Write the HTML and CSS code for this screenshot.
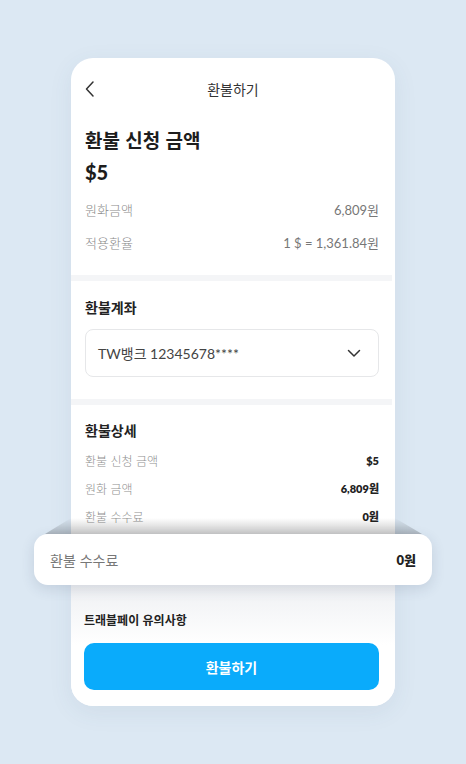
FILE: index.html
```html
<!DOCTYPE html>
<html lang="ko">
<head>
<meta charset="utf-8">
<link rel="stylesheet" href="styles.css">
</head>
<body>
<div class="card">
  <header class="top-bar">
    <svg class="back" width="12" height="18" viewBox="0 0 12 18"><path d="M9 2 L2.5 9 L9 16" fill="none" stroke="#333" stroke-width="1.5" stroke-linecap="round" stroke-linejoin="round"/></svg>
    <span class="top-title">환불하기</span>
  </header>

  <section class="summary">
    <h1 class="big">환불 신청 금액</h1>
    <div class="big amount">$5</div>
    <div class="rows">
      <div class="row"><span class="lbl">원화금액</span><span class="val">6,809원</span></div>
      <div class="row"><span class="lbl">적용환율</span><span class="val">1 $ = 1,361.84원</span></div>
    </div>
  </section>

  <div class="band"></div>

  <section class="account">
    <h2 class="sec-title">환불계좌</h2>
    <div class="select">
      <span>TW뱅크 12345678****</span>
      <svg width="14" height="9" viewBox="0 0 14 9"><path d="M1.5 1.5 L7 7 L12.5 1.5" fill="none" stroke="#333" stroke-width="1.5" stroke-linecap="round" stroke-linejoin="round"/></svg>
    </div>
  </section>

  <div class="band"></div>

  <section class="detail">
    <h2 class="sec-title">환불상세</h2>
    <div class="drows">
      <div class="drow"><span>환불 신청 금액</span><b>$5</b></div>
      <div class="drow"><span>원화 금액</span><b>6,809원</b></div>
      <div class="drow"><span>환불 수수료</span><b>0원</b></div>
    </div>
  </section>

  <div class="float">
    <span>환불 수수료</span><b>0원</b>
  </div>

  <section class="bottom">
    <h3 class="notice">트래블페이 유의사항</h3>
    <button class="cta">환불하기</button>
  </section>
</div>
</body>
</html>
```

FILE: styles.css
```css
* { box-sizing: border-box; margin: 0; padding: 0; }
html, body { height: 100%; }
body {
  background: #dce8f3;
  font-family: Lato, "Noto Sans CJK KR", sans-serif;
  color: #222;
  display: flex;
  justify-content: center;
  padding-top: 58px;
}
.card {
  width: 324px;
  height: 648px;
  background: #fff;
  border-radius: 22px;
  box-shadow: 0 6px 24px rgba(60, 90, 120, 0.08);
  display: flex;
  flex-direction: column;
  position: relative;
}
.top-bar {
  height: 60px;
  padding: 20px 14px 0;
  position: relative;
  display: flex;
  justify-content: center;
}
.back { position: absolute; left: 13px; top: 22px; }
.top-title { font-size: 14px; line-height: 22px; color: #333; font-family: "Noto Sans CJK KR", sans-serif; }
.summary { padding: 8px 16px 22px 14px; }
.big { font-size: 19px; line-height: 28px; font-weight: 700; color: #1d1d1d; font-family: "Noto Sans CJK KR", sans-serif; }
.amount { margin-top: 4px; font-size: 20px; font-family: Lato, sans-serif; font-weight: 900; }
.rows { margin-top: 14px; display: flex; flex-direction: column; gap: 13px; }
.row { display: flex; justify-content: space-between; font-size: 13px; line-height: 20px; color: #8a8a8a; }
.row .lbl { font-family: "Noto Sans CJK KR", sans-serif; font-weight: 300; }
.row .val { color: #777; }
.band { height: 6px; background: #f4f5f7; margin-right: 3px; }
.account { padding: 16px 16px 22px 14px; }
.sec-title { font-size: 14px; line-height: 20px; font-weight: 700; color: #222; font-family: "Noto Sans CJK KR", sans-serif; }
.select {
  margin-top: 12px;
  height: 48px;
  border: 1px solid #e6e7e9;
  border-radius: 8px;
  display: flex;
  align-items: center;
  justify-content: space-between;
  padding: 0 17px 0 12px;
  font-size: 14px;
  color: #444;
}
.detail { padding: 15px 16px 0 14px; }
.drows { margin-top: 11px; display: flex; flex-direction: column; gap: 10px; }
.drow { display: flex; justify-content: space-between; align-items: center; height: 18px; font-size: 12px; color: #8f8f8f; font-family: "Noto Sans CJK KR", sans-serif; font-weight: 300; }
.drow b { font-size: 11px; font-weight: 800; color: #222; font-family: Lato, "Noto Sans CJK KR", sans-serif; }
.float {
  position: relative;
  margin: 9px -37px 0;
  height: 51px;
  background: #fff;
  border-radius: 14px;
  box-shadow: 0 4px 14px rgba(40, 60, 90, 0.14);
  display: flex;
  align-items: center;
  justify-content: space-between;
  padding: 0 16px;
  font-size: 14px;
  color: #777;
  font-family: "Noto Sans CJK KR", sans-serif;
  z-index: 2;
}
.float::before {
  content: "";
  position: absolute;
  left: 11px;
  right: 10px;
  top: -16px;
  height: 16px;
  background: linear-gradient(to bottom, rgba(0, 0, 0, 0), rgba(0, 0, 0, 0.22));
  clip-path: polygon(26px 0, calc(100% - 27px) 0, 100% 100%, 0 100%);
}
.float b { color: #222; font-weight: 800; font-size: 13px; font-family: Lato, "Noto Sans CJK KR", sans-serif; }
.bottom {
  flex: 1;
  margin-top: -10px;
  padding: 36px 16px 16px 13px;
  background: linear-gradient(to bottom, #eceef1 0, #fff 70px);
  border-radius: 0 0 22px 22px;
  display: flex;
  flex-direction: column;
}
.notice { font-size: 12px; line-height: 18px; font-weight: 700; color: #222; font-family: "Noto Sans CJK KR", sans-serif; }
.cta {
  margin-top: auto;
  height: 47px;
  border: none;
  border-radius: 10px;
  background: #0aabfb;
  color: #fff;
  font-size: 14px;
  font-weight: 700;
  font-family: "Noto Sans CJK KR", sans-serif;
}
```
